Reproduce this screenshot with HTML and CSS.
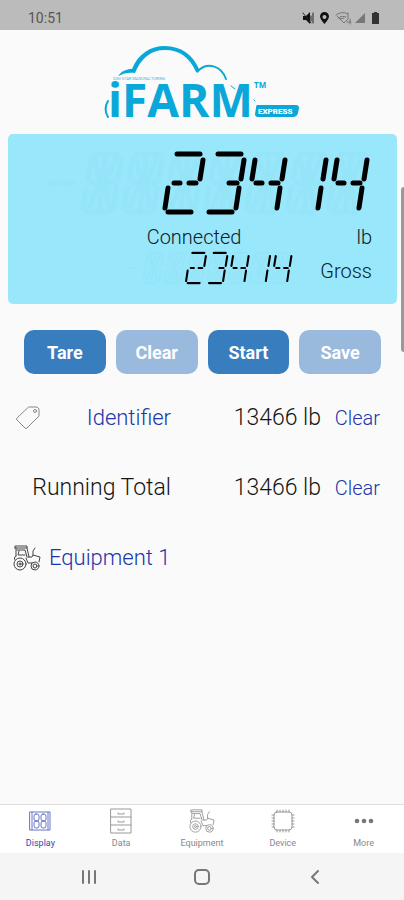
FILE: index.html
```
<!DOCTYPE html>
<html lang="en">
<head>
<meta charset="utf-8">
<meta name="viewport" content="width=device-width, initial-scale=1">
<title>iFARM Express</title>
<link rel="stylesheet" href="styles.css">
</head>
<body>
<svg class="defs" aria-hidden="true">
  <defs>
    <g id="s-top"><path d="M14 3H37"/></g>
    <g id="s-tr"><path d="M40 9L37 28"/></g>
    <g id="s-br"><path d="M35 37L32 57"/></g>
    <g id="s-mid"><path d="M11 32H17M26 32H33"/></g>
    <g id="s-bot"><path d="M5 61H28"/></g>
    <g id="s-tl"><path d="M10 9L7 28"/></g>
    <g id="s-bl"><path d="M5 37L2 57"/></g>
    <g id="d2"><use href="#s-top"/><use href="#s-tr"/><use href="#s-mid"/><use href="#s-bl"/><use href="#s-bot"/></g>
    <g id="d3"><use href="#s-top"/><use href="#s-tr"/><path d="M25 32H33"/><use href="#s-br"/><use href="#s-bot"/></g>
    <g id="d4"><use href="#s-tl"/><use href="#s-tr"/><use href="#s-mid"/><use href="#s-br"/></g>
    <g id="d1"><use href="#s-tr"/><use href="#s-br"/></g>
    <g id="d8"><use href="#s-top"/><use href="#s-tr"/><use href="#s-br"/><use href="#s-mid"/><use href="#s-bot"/><use href="#s-tl"/><use href="#s-bl"/><path d="M24 8L18 58M14 8L19 28M35 8L25 28M17 36L8 56M24 36L28 56"/></g>
    <symbol id="reading" viewBox="0 0 328 64">
      <g class="ghost">
        <path d="M6 32H14M20 32H28"/>
        <use href="#d8" x="37"/><use href="#d8" x="78"/><use href="#d8" x="119"/><use href="#d8" x="160"/><use href="#d8" x="201"/><use href="#d8" x="242"/><use href="#d8" x="283"/>
      </g>
      <use href="#d2" x="119"/><use href="#d3" x="160"/><use href="#d4" x="201"/><use href="#d1" x="242"/><use href="#d4" x="283"/>
    </symbol>
    <symbol id="tractor" viewBox="0 0 28 26">
      <path d="M2 3V1h12v2H2M3 3v8M4 5h8l2 7M6 6l-1 4h7M14 3l2 9M3 11c-2 1-2 3-1 4M13 13l2 5h4M15 12h4l1-2 7 2-1 5M20 10V6l2-3"/>
      <circle cx="7" cy="19" r="6"/><circle cx="7" cy="19" r="3"/><circle cx="7" cy="19" r="1"/>
      <circle cx="22" cy="21" r="4"/><circle cx="22" cy="21" r="2"/>
    </symbol>
  </defs>
</svg>

<header class="status">
  <span class="clock">10:51</span>
  <svg class="status-icons" width="78" height="14" viewBox="0 0 78 14" aria-hidden="true">
    <path class="dark" d="M1 5h3l4-4v12L4 9H1z"/><path class="dark-line" d="M1 2l8 10M11 2v10M9 5v5"/>
    <path class="dark" fill-rule="evenodd" d="M22.500 1a4.500 4.500 0 0 0-4.500 4.500C18 8 22.500 13 22.500 13S27 8 27 5.500A4.500 4.500 0 0 0 22.500 1zm0 3a2 2 0 1 1 0 4 2 2 0 0 1 0-4z"/>
    <path class="mid-line" d="M34 4c4-3 9-3 12-1M36 7c3-2 6-2 8-1M35 5l7 7 4-4M38 8l4-1M46 2v5M48 8v5M45 11h4"/>
    <path class="mid" d="M53 12L63 2v10z"/>
    <path class="battery" d="M70 2h2V1h3v1h2v11h-7z"/>
  </svg>
</header>

<main class="page">
  <svg class="logo" width="196" height="76" viewBox="0 0 196 76" role="img" aria-label="iFARM Express">
    <path class="cloud" d="M14 31C18 26 22 24 28 24C34 9 46 1 61 1C77 1 89 10 95 24L94 28L92 27C86 13 76 5 61 5C47 5 37 13 31 28C25 27 20 28 14 31Z"/>
    <path class="cloud-line" d="M94 26C103 17 117 20 122 34"/>
    <path class="cloud-line" d="M4 56C1 61 1 67 4 72"/>
    <path class="cloud-mark" d="M127 41l4 3M150 55l1 1"/>
    <text class="maker" x="9" y="35">DIGI-STAR MANUFACTURING</text>
    <text class="brand" x="4" y="72">iFARM</text>
    <text class="tm" x="150" y="43">TM</text>
    <path class="cloud" d="M153 60h39q3 0 3 3l-1 5q-1 4-5 4h-35q-3 0-3-3l1-6q0-3 1-3z"/>
    <text class="express" x="154" y="69">EXPRESS</text>
  </svg>

  <section class="panel" aria-label="Scale reading">
    <svg class="reading-main" viewBox="0 0 328 64" role="img" aria-label="23414"><use href="#reading"/></svg>
    <div class="panel-row"><span class="state">Connected</span><span>lb</span></div>
    <div class="panel-row panel-gross">
      <svg class="reading-sub" viewBox="0 0 328 64" role="img" aria-label="23414"><use href="#reading"/></svg>
      <span class="mode">Gross</span>
    </div>
  </section>

  <div class="actions">
    <button type="button">Tare</button>
    <button type="button" class="soft">Clear</button>
    <button type="button">Start</button>
    <button type="button" class="soft">Save</button>
  </div>

  <div class="totals">
    <svg class="tag" width="26" height="26" viewBox="0 0 26 26" aria-hidden="true"><path d="M14 2h8l2 2v7L12 23q-1 1-2 0L2 15q-1-1 0-2z"/><circle cx="20" cy="6" r="1.500"/></svg>
    <a class="label" href="#identifier">Identifier</a>
    <span class="amount">13466 lb</span>
    <button type="button" class="clear">Clear</button>
    <span class="label wide">Running Total</span>
    <span class="amount">13466 lb</span>
    <button type="button" class="clear">Clear</button>
  </div>

  <a class="equipment" href="#equipment-1">
    <svg width="28" height="28" viewBox="0 0 28 26" aria-hidden="true"><use href="#tractor"/></svg>
    <span>Equipment 1</span>
  </a>
  <div class="scrollbar" aria-hidden="true"></div>
</main>

<nav class="tabs" aria-label="Sections">
  <a class="active" href="#display">
    <svg width="26" height="26" viewBox="0 0 26 26" aria-hidden="true"><path d="M3 4h20v18H3zM5 4v18M21 4v18"/><rect x="7" y="6" width="5" height="7" rx="2"/><rect x="7" y="13" width="5" height="7" rx="2"/><rect x="14" y="6" width="5" height="7" rx="2"/><rect x="14" y="13" width="5" height="7" rx="2"/></svg>
    <span>Display</span></a>
  <a href="#data">
    <svg width="26" height="26" viewBox="0 0 26 26" aria-hidden="true"><path d="M3 1h20v24H3zM3 9h20M3 17h20M10 5v1h6V5M10 13v1h6v-1M10 21v1h6v-1"/></svg>
    <span>Data</span></a>
  <a href="#equipment">
    <svg width="26" height="26" viewBox="0 0 28 26" aria-hidden="true"><use href="#tractor"/></svg>
    <span>Equipment</span></a>
  <a href="#device">
    <svg width="26" height="26" viewBox="0 0 26 26" aria-hidden="true"><rect x="4" y="4" width="18" height="18" rx="3"/><path d="M7 4V2M10 4V2M13 4V2M16 4V2M19 4V2M7 22v2M10 22v2M13 22v2M16 22v2M19 22v2M4 7H2M4 10H2M4 13H2M4 16H2M4 19H2M22 7h2M22 10h2M22 13h2M22 16h2M22 19h2"/></svg>
    <span>Device</span></a>
  <a href="#more">
    <svg class="dots" width="26" height="26" viewBox="0 0 26 26" aria-hidden="true"><circle cx="6" cy="13" r="2.300"/><circle cx="13" cy="13" r="2.300"/><circle cx="20" cy="13" r="2.300"/></svg>
    <span>More</span></a>
</nav>

<footer class="system">
  <button type="button" aria-label="Recent apps"><svg width="20" height="20" viewBox="0 0 20 20"><path d="M4 4v12M10 4v12M16 4v12"/></svg></button>
  <button type="button" aria-label="Home"><svg width="20" height="20" viewBox="0 0 20 20"><rect x="3" y="3" width="14" height="14" rx="4"/></svg></button>
  <button type="button" aria-label="Back"><svg width="20" height="20" viewBox="0 0 20 20"><path d="M13 4L7 10l6 6"/></svg></button>
</footer>
</body>
</html>
```
FILE: styles.css
```
* { box-sizing: border-box; }
body {
  margin: 0;
  min-height: 100vh;
  display: flex;
  flex-direction: column;
  background: #fafafa;
  color: #151515;
  font-family: Roboto, "Liberation Sans", sans-serif;
}
a { text-decoration: none; }
button { font-family: inherit; border: 0; padding: 0; background: none; }
svg { fill: none; stroke-linecap: round; stroke-linejoin: round; }
.defs { position: absolute; width: 0; height: 0; }

.status {
  display: flex;
  align-items: center;
  justify-content: space-between;
  height: 30px;
  padding: 6px 24px 0 28px;
  background: #bbb;
}
.clock { font-size: 14px; line-height: 20px; color: #555; }
.dark { fill: #111; }
.dark-line { stroke: #222; }
.mid { fill: #777; }
.mid-line { stroke: #777; }
.battery { fill: #333; }

.page { position: relative; flex: 1; display: flex; flex-direction: column; }
.logo { align-self: center; margin: 15px 0 13px; }
.cloud { fill: #0aa8d8; }
.cloud-line { stroke: #0aa8d8; stroke-width: 2; }
.cloud-mark { stroke: #0aa8d8; stroke-width: 1; }
.logo text { fill: #0aa8d8; font-family: "Open Sans", sans-serif; font-weight: 700; }
.logo .maker { font-family: Roboto, sans-serif; font-size: 4px; font-weight: 400; opacity: .8; }
.logo .brand { font-size: 46px; }
.logo .tm { font-size: 8px; }
.logo .express { font-family: Roboto, sans-serif; font-size: 8px; fill: #fff; font-weight: 900; }

.panel {
  display: flex;
  flex-direction: column;
  margin: 0 7px 0 8px;
  padding: 17px 25px 19px;
  border-radius: 5px;
  background: #99e7fb;
  font-size: 20px;
  line-height: 24px;
  color: #0b2026;
}
.reading-main, .reading-sub { stroke: #000; }
.reading-main { align-self: flex-end; width: 328px; height: 64px; stroke-width: 5; }
.reading-sub { width: 171px; height: 34px; stroke-width: 4; }
.ghost { stroke: #93e2f6; stroke-opacity: .6; }
.panel-row { display: flex; justify-content: flex-end; margin-top: 10px; font-weight: 350; }
.state { margin-right: 115px; }
.panel-gross { margin-top: 2px; align-items: flex-start; }
.mode { width: 78px; padding-top: 8px; text-align: right; }

.actions {
  display: grid;
  grid-template-columns: repeat(4, 1fr);
  gap: 10px;
  margin: 26px 23px 0 24px;
}
.actions button {
  height: 44px;
  border-radius: 10px;
  background: #387dbd;
  color: #fff;
  font-size: 18px;
  font-weight: 700;
}
.actions .soft { background: #99badc; }

.totals {
  display: grid;
  grid-template-columns: 26px 1fr 150px 59px;
  row-gap: 42px;
  align-items: center;
  margin: 30px 24px 0 15px;
  font-size: 23px;
  font-weight: 350;
  line-height: 28px;
}
.tag { stroke: #888; }
.label, .amount { text-align: right; }
.wide { grid-column: 1 / 3; }
.totals a, .clear, .equipment { color: #2035a8; }
.clear { font-size: 20px; font-weight: 350; line-height: 28px; text-align: right; }

.equipment {
  display: flex;
  align-items: center;
  gap: 8px;
  margin: 42px 0 0 13px;
  font-size: 22px;
  font-weight: 350;
  line-height: 28px;
}
.totals a { font-size: 22px; }
.equipment svg { stroke: #444; }
.scrollbar {
  position: absolute;
  top: 157px;
  right: 0;
  width: 3px;
  height: 165px;
  border-radius: 3px 0 0 3px;
  background: #999;
}

.tabs {
  display: grid;
  grid-template-columns: repeat(5, 1fr);
  height: 49px;
  border-top: 1px solid #ddd;
  background: #fff;
}
.tabs a {
  display: flex;
  flex-direction: column;
  align-items: center;
  padding-top: 3px;
  color: #888;
  font-size: 9px;
  line-height: 18px;
}
.tabs svg { stroke: #999; }
.tabs .active { color: #3546ae; }
.tabs .active svg { stroke: #6876c8; }
.tabs .dots { fill: #777; stroke: none; }

.system {
  display: flex;
  justify-content: space-around;
  align-items: center;
  height: 47px;
  padding: 0 32px;
  background: #f5f5f5;
}
.system svg { display: block; stroke: #777; stroke-width: 2; }
```
